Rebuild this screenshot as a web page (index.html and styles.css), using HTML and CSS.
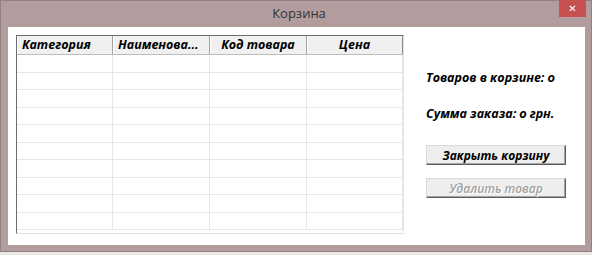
FILE: index.html
```html
<!DOCTYPE html>
<html lang="ru">
<head>
    <meta charset="UTF-8">
    <meta name="viewport" content="width=device-width, initial-scale=1.0">
    <title>Корзина</title>
    <link rel="stylesheet" href="styles.css">
</head>
<body>
    <div class="window">
        <!-- Title bar -->
        <div class="titlebar">
            <span></span>
            <span class="title">Корзина</span>
            <button class="close-btn">&#x2715;</button>
        </div>

        <div class="client">
            <!-- Cart table -->
            <div class="grid">
                <div class="grid-head">
                    <div class="head-cell">Категория</div>
                    <div class="head-cell">Наименова...</div>
                    <div class="head-cell center">Код товара</div>
                    <div class="head-cell center">Цена</div>
                </div>
                <div class="grid-body">
                    <div class="row"><div></div><div></div><div></div><div></div></div>
                    <div class="row"><div></div><div></div><div></div><div></div></div>
                    <div class="row"><div></div><div></div><div></div><div></div></div>
                    <div class="row"><div></div><div></div><div></div><div></div></div>
                    <div class="row"><div></div><div></div><div></div><div></div></div>
                    <div class="row"><div></div><div></div><div></div><div></div></div>
                    <div class="row"><div></div><div></div><div></div><div></div></div>
                    <div class="row"><div></div><div></div><div></div><div></div></div>
                    <div class="row"><div></div><div></div><div></div><div></div></div>
                    <div class="row"><div></div><div></div><div></div><div></div></div>
                </div>
            </div>

            <!-- Summary -->
            <div class="side">
                <p class="info">Товаров в корзине: 0</p>
                <p class="info sum">Сумма заказа: 0 грн.</p>
                <button class="btn">Закрыть корзину</button>
                <button class="btn" disabled>Удалить товар</button>
            </div>
        </div>
    </div>
</body>
</html>
```

FILE: styles.css
```css
body {
    margin: 0;
    background-color: #ebe8e8;
    font-family: 'Open Sans', 'Noto Sans', sans-serif;
}
.window {
    width: 592px;
    height: 252px;
    box-sizing: border-box;
    border: 1px solid #8f8082;
    background-color: #b39c9e;
    display: flex;
    flex-direction: column;
}
.titlebar {
    height: 26px;
    display: grid;
    grid-template-columns: 1fr auto 1fr;
    align-items: start;
}
.title {
    font-size: 13px;
    line-height: 24px;
    color: #333;
    padding-left: 6px;
}
.close-btn {
    justify-self: end;
    width: 27px;
    height: 17px;
    margin: -1px 5px 0 0;
    padding: 0;
    border: none;
    background-color: #c75050;
    color: white;
    font-family: 'DejaVu Sans', sans-serif;
    font-size: 10px;
    font-weight: bold;
    line-height: 17px;
}
.client {
    flex: 1;
    margin: 0 6px 6px 7px;
    padding: 8px 0 0 8px;
    background: white;
    display: flex;
    gap: 22px;
}
.grid {
    width: 388px;
    height: 199px;
    box-sizing: border-box;
    border: 1px solid;
    border-color: #6e6e6e #e3e3e3 #e3e3e3 #6e6e6e;
}
.grid-head,
.row {
    display: grid;
    grid-template-columns: 96px 97px 97px 96px;
}
.grid-head {
    height: 19px;
    background-color: #f0f0f0;
    border-bottom: 1px solid #bdbdbd;
    box-sizing: border-box;
}
.head-cell {
    font-size: 12.5px;
    font-weight: bold;
    font-style: italic;
    line-height: 18px;
    padding-left: 5px;
    border-right: 1px solid #a0a0a0;
    box-shadow: inset 1px 0 white;
    white-space: nowrap;
    overflow: hidden;
}
.head-cell.center {
    text-align: center;
    padding-left: 0;
}
.head-cell:last-child {
    border-right-color: #8a8a8a;
}
.row {
    height: 17.5px;
    box-sizing: border-box;
    border-bottom: 1px solid #e6e6e6;
}
.row div {
    border-right: 1px solid #e6e6e6;
}
.side {
    width: 140px;
    display: flex;
    flex-direction: column;
    padding-top: 34px;
}
.info {
    margin: 0 0 19px;
    font-size: 12.5px;
    font-weight: bold;
    font-style: italic;
    line-height: 17px;
    font-variant-numeric: oldstyle-nums;
    white-space: nowrap;
}
.info.sum {
    margin-bottom: 23px;
}
.btn {
    height: 20px;
    margin: 0 0 13px;
    padding: 0;
    border: 1px solid;
    border-color: #dadada #5c5c5c #5c5c5c #dadada;
    box-shadow: inset -1px -1px #a5a5a5;
    background-color: #eeeeee;
    font-family: inherit;
    font-size: 12px;
    font-weight: bold;
    font-style: italic;
    color: black;
}
.btn:disabled {
    color: #a2a2a2;
    font-weight: 600;
    text-shadow: 1px 1px white;
}
```
